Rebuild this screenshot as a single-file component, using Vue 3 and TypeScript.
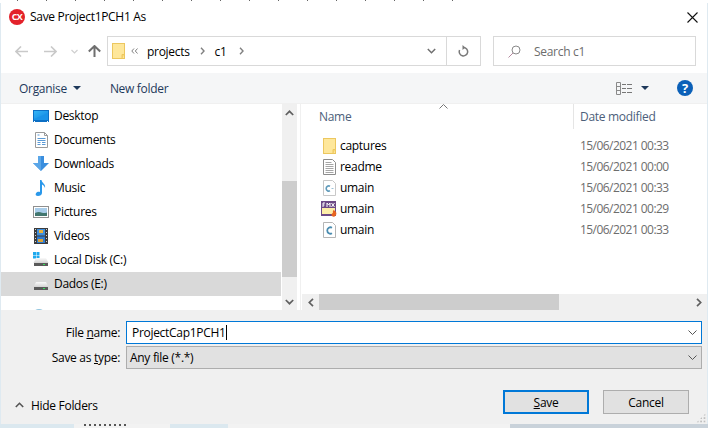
<template>
  <div class="screen">
    <svg class="sprites" width="0" height="0" aria-hidden="true">
      <defs>
        <linearGradient id="screen-fill" x1="0" y1="0" x2="1" y2="1">
          <stop offset="0" stop-color="#35b4f5" />
          <stop offset="1" stop-color="#0d84e2" />
        </linearGradient>
        <linearGradient id="disk-fill" x1="0" y1="0" x2="0" y2="1">
          <stop offset="0" stop-color="#fafafa" />
          <stop offset="1" stop-color="#d2d2d2" />
        </linearGradient>
      </defs>
      <symbol id="i-folder" viewBox="0 0 13 16">
        <rect x="0.5" y="0.5" width="12" height="15" fill="#fee79b" stroke="#ecc75f" />
        <path d="M10 15.5v-4h2.5" fill="#fbd56f" stroke="#ecc75f" />
      </symbol>
      <symbol id="i-desktop" viewBox="0 0 16 13">
        <rect x="0" y="0" width="16" height="12" fill="#0c6fc4" />
        <rect x="1" y="1" width="14" height="9" fill="url(#screen-fill)" />
        <path d="M1 9L15 3v7H1z" fill="#1a93e8" />
        <rect x="1" y="11" width="1" height="1" fill="#fff" />
        <rect x="14" y="11" width="1" height="1" fill="#fff" />
      </symbol>
      <symbol id="i-documents" viewBox="0 0 13 16">
        <path d="M.5.5h9l3 3v12H.5z" fill="#fff" stroke="#9a9a9a" />
        <path d="M2.500 3h2M2.500 6.500h8M2.500 8.500h8M2.500 10.500h3M7 10.500h3.500M2.500 12.500h3M7 12.500h3.500" stroke="#5b9ad6" />
        <path d="M9.500.5v3h3" fill="none" stroke="#9a9a9a" />
      </symbol>
      <symbol id="i-downloads" viewBox="0 0 16 16">
        <path d="M5 0h6v7h5l-8 8-8-8h5z" fill="#3a8ede" />
        <path d="M5 0h3v15l-8-8h5z" fill="#5aa6e8" />
      </symbol>
      <symbol id="i-music" viewBox="0 0 12 16">
        <path d="M5 0h1.500c.3 3 4.500 4 3.500 8-.5-2-1.800-3-3-3.500V13c0 2-2 3-4 3S0 14.500 1 13.200 3.500 11.500 5 12z" fill="#2a98ea" />
      </symbol>
      <symbol id="i-pictures" viewBox="0 0 16 12">
        <rect x="0.500" y="0.500" width="15" height="11" fill="#fff" stroke="#8f8f8f" />
        <rect x="2" y="2" width="12" height="8" fill="#a9cdea" />
        <path d="M2 7c3-1.500 5-1 7-.3s3 .3 5-.2V10H2z" fill="#42776f" />
      </symbol>
      <symbol id="i-videos" viewBox="0 0 14 16">
        <rect width="14" height="16" fill="#3c3c3c" />
        <rect x="3" y="1" width="8" height="6.500" fill="#3f8fdd" />
        <rect x="3" y="8.500" width="8" height="6.500" fill="#2e7ad0" />
        <rect x="5" y="2" width="4" height="3" fill="#e8b23c" />
        <rect x="4" y="11" width="5" height="3" fill="#d9a238" />
        <path d="M1 1.500h1M1 4.500h1M1 7.500h1M1 10.500h1M1 13.500h1M12 1.500h1M12 4.500h1M12 7.500h1M12 10.500h1M12 13.500h1" stroke="#d0d0d0" />
      </symbol>
      <symbol id="i-disk-c" viewBox="0 0 16 16">
        <path d="M0 0h3v3H0zM3.500 0h3v3h-3zM0 3.500h3v3H0zM3.500 3.500h3v3h-3z" fill="#1ea9ee" />
        <path d="M3 6h10l2.500 5H.5z" fill="url(#disk-fill)" />
        <rect x="1" y="11" width="14" height="3" fill="#5a5a5a" />
        <rect x="10" y="12" width="2" height="1" fill="#35e05a" />
      </symbol>
      <symbol id="i-disk" viewBox="0 0 16 16">
        <path d="M3 6h10l2.500 5H.5z" fill="url(#disk-fill)" />
        <rect x="1" y="11" width="14" height="3" fill="#5a5a5a" />
        <rect x="10" y="12" width="2" height="1" fill="#35e05a" />
      </symbol>
      <symbol id="i-network" viewBox="0 0 16 16">
        <circle cx="8" cy="8" r="7" fill="#8fc4de" />
        <circle cx="6" cy="5" r="2.500" fill="#dff0f7" />
      </symbol>
      <symbol id="i-text" viewBox="0 0 13 16">
        <path d="M.5.500h9l3 3v12H.5z" fill="#fff" stroke="#8c8c8c" />
        <path d="M2.500 3.500h6M2.500 5.500h8M2.500 7.500h8M2.500 9.500h8M2.500 11.500h8M2.500 13.500h8" stroke="#a6a6a6" />
      </symbol>
      <symbol id="i-cpp" viewBox="0 0 13 16">
        <path d="M.5.500h9l3 3v12H.5z" fill="#fff" stroke="#c8c8c8" />
        <path d="M7 6.200A2.600 2.600 0 1 0 7 10.800" fill="none" stroke="#5f9aba" stroke-width="1.600" />
        <path d="M8.500 8.500h2" stroke="#9cc2d8" />
      </symbol>
      <symbol id="i-c" viewBox="0 0 13 16">
        <path d="M.5.500h9l3 3v12H.5z" fill="#fff" stroke="#b5b5b5" />
        <path d="M9 5.700A3.200 3.200 0 1 0 9 11.300" fill="none" stroke="#4a8cb0" stroke-width="1.800" />
      </symbol>
      <symbol id="i-fmx" viewBox="0 0 16 16">
        <rect x="0" y="0" width="15" height="15" fill="#6d4a86" />
        <rect x="1" y="7" width="13" height="6" fill="#fdeea8" />
        <path d="M2 2v4M2 2h2M2 4h1.500M6 6V2l1.500 2L9 2v4M10.500 2l3 4M13.500 2l-3 4" fill="none" stroke="#fff" />
        <path d="M12.500 9c2.500 1 3.500 3 2.500 5s-3 2.200-4 1-.5-2.500 1-3c-.5-1 0-2 .5-3z" fill="#e8641f" />
      </symbol>
    </svg>

    <div class="strip strip-top"></div>

    <div class="window">
      <header class="titlebar">
        <span class="logo">CX</span>
        <span class="title">Save Project1PCH1 As</span>
        <svg class="close" width="11" height="11" viewBox="0 0 11 11">
          <path d="M.5.500l10 10M10.500.500l-10 10" stroke="#111" stroke-width="1.100" />
        </svg>
      </header>

      <div class="navbar">
        <div class="nav-buttons">
          <svg class="nav-back" width="13" height="11" viewBox="0 0 13 11">
            <path d="M6 .5L1 5.500l5 5M1 5.500h12" fill="none" stroke="#c9c9c9" stroke-width="1.600" />
          </svg>
          <svg class="nav-forward" width="13" height="11" viewBox="0 0 13 11">
            <path d="M7 .5l5 5-5 5M12 5.500H0" fill="none" stroke="#c9c9c9" stroke-width="1.600" />
          </svg>
          <svg class="nav-recent" width="7" height="5" viewBox="0 0 7 5">
            <path d="M.5 1l3 3 3-3" fill="none" stroke="#cfcfcf" stroke-width="1.200" />
          </svg>
          <svg class="nav-up" width="13" height="12" viewBox="0 0 13 12">
            <path d="M.8 6.500L6.500 1l5.700 5.500M6.500 1v11" fill="none" stroke="#6f6f6f" stroke-width="2" />
          </svg>
        </div>
        <div class="address">
          <svg class="address-folder" width="13" height="16"><use href="#i-folder" /></svg>
          <svg class="crumb-more" width="7" height="6" viewBox="0 0 7 6">
            <path d="M3 .5L.8 3 3 5.500M6.500.5L4.300 3l2.200 2.500" fill="none" stroke="#808080" />
          </svg>
          <span class="crumb">projects</span>
          <svg class="crumb-sep" width="5" height="8" viewBox="0 0 5 8">
            <path d="M1 .8L4 4 1 7.200" fill="none" stroke="#808080" stroke-width="1.400" />
          </svg>
          <span class="crumb">c1</span>
          <svg class="crumb-sep crumb-sep-last" width="5" height="8" viewBox="0 0 5 8">
            <path d="M1 .8L4 4 1 7.200" fill="none" stroke="#808080" stroke-width="1.400" />
          </svg>
          <svg class="address-drop" width="9" height="6" viewBox="0 0 9 6">
            <path d="M.8 1l3.700 3.700L8.200 1" fill="none" stroke="#6f6f6f" stroke-width="1.500" />
          </svg>
          <div class="refresh">
            <svg width="11" height="12" viewBox="0 0 11 12">
              <path d="M5.500 2.500A4.200 4.200 0 1 1 1.600 5" fill="none" stroke="#7a7a7a" stroke-width="1.500" />
              <path d="M4.500 0v5l2.800-2.500z" fill="#7a7a7a" />
            </svg>
          </div>
        </div>
        <div class="search">
          <svg width="13" height="13" viewBox="0 0 13 13">
            <circle cx="8" cy="5" r="4" fill="none" stroke="#8a8a8a" />
            <path d="M5 8l-4.500 4.500" stroke="#b58aa0" />
          </svg>
          <span>Search c1</span>
        </div>
      </div>

      <div class="toolbar">
        <span class="tool">Organise</span>
        <span class="caret caret-organise"></span>
        <span class="tool tool-new">New folder</span>
        <svg class="view-icon" width="17" height="13" viewBox="0 0 17 13">
          <path d="M.5.500h4v12h-4zM.5 4.500h4M.5 8.500h4" fill="none" stroke="#8a8a8a" />
          <path d="M6 2.500h4M11 2.500h5M6 6.500h4M11 6.500h5M6 10.500h4M11 10.500h5" stroke="#777" />
        </svg>
        <span class="caret caret-view"></span>
        <span class="help">?</span>
      </div>

      <div class="main">
        <nav class="nav-pane">
          <div
            v-for="item in places"
            :key="item.label"
            class="place"
            :class="{ selected: item.selected }"
          >
            <span class="place-icon">
              <svg :width="item.w" :height="item.h"><use :href="'#i-' + item.icon" /></svg>
            </span>
            <span class="place-label">{{ item.label }}</span>
          </div>
          <svg class="peek-icon" width="16" height="16"><use href="#i-network" /></svg>
        </nav>
        <div class="vscroll">
          <div class="arrow-btn">
            <svg width="9" height="6" viewBox="0 0 9 6"><path d="M.8 5l3.700-3.700L8.200 5" fill="none" stroke="#606060" stroke-width="1.700" /></svg>
          </div>
          <div class="vtrack"><div class="vthumb"></div></div>
          <div class="arrow-btn">
            <svg width="9" height="6" viewBox="0 0 9 6"><path d="M.8 1l3.700 3.700L8.200 1" fill="none" stroke="#606060" stroke-width="1.700" /></svg>
          </div>
        </div>
        <div class="splitter"></div>
        <section class="file-pane">
          <div class="file-header">
            <svg class="sort-caret" width="9" height="5" viewBox="0 0 9 5">
              <path d="M.5 4.500l4-4 4 4" fill="none" stroke="#777" />
            </svg>
            <span class="col-name">Name</span>
            <span class="col-date">Date modified</span>
          </div>
          <div class="file-rows">
            <div v-for="file in files" :key="file.icon + file.date" class="file-row">
              <span class="file-icon">
                <svg :width="file.w" height="16"><use :href="'#i-' + file.icon" /></svg>
              </span>
              <span class="file-name">{{ file.name }}</span>
              <span class="file-date">{{ file.date }}</span>
            </div>
          </div>
          <div class="hscroll">
            <svg class="hleft" width="6" height="9" viewBox="0 0 6 9"><path d="M5 .8L1.300 4.500 5 8.200" fill="none" stroke="#606060" stroke-width="1.700" /></svg>
            <div class="hthumb"></div>
            <svg class="hright" width="6" height="9" viewBox="0 0 6 9"><path d="M1 .8l3.700 3.700L1 8.200" fill="none" stroke="#606060" stroke-width="1.700" /></svg>
          </div>
        </section>
      </div>

      <div class="bottom">
        <div class="field field-name">
          <label>File <u>n</u>ame:</label>
          <div class="input input-active">
            <span>ProjectCap1PCH1</span><i class="cursor"></i>
            <svg class="chev" width="9" height="5" viewBox="0 0 9 5"><path d="M.5.500l4 4 4-4" fill="none" stroke="#555" /></svg>
          </div>
        </div>
        <div class="field field-type">
          <label>Save as <u>t</u>ype:</label>
          <div class="input input-select">
            <span>Any file (*.*)</span>
            <svg class="chev" width="9" height="5" viewBox="0 0 9 5"><path d="M.5.500l4 4 4-4" fill="none" stroke="#555" /></svg>
          </div>
        </div>
        <div class="actions">
          <div class="hide-folders">
            <svg width="9" height="6" viewBox="0 0 9 6"><path d="M.8 5l3.700-3.700L8.200 5" fill="none" stroke="#555" stroke-width="1.600" /></svg>
            <span>Hide Folders</span>
          </div>
          <button class="btn btn-primary"><u>S</u>ave</button>
          <button class="btn">Cancel</button>
        </div>
        <div class="grip"></div>
      </div>
    </div>

    <div class="strip strip-bottom"></div>
  </div>
</template>

<script setup lang="ts">
interface Place {
  label: string
  icon: string
  w: number
  h: number
  selected?: boolean
}

interface FileRow {
  name: string
  icon: string
  w: number
  date: string
}

const places: Place[] = [
  { label: 'Desktop', icon: 'desktop', w: 16, h: 13 },
  { label: 'Documents', icon: 'documents', w: 13, h: 16 },
  { label: 'Downloads', icon: 'downloads', w: 16, h: 16 },
  { label: 'Music', icon: 'music', w: 12, h: 16 },
  { label: 'Pictures', icon: 'pictures', w: 16, h: 12 },
  { label: 'Videos', icon: 'videos', w: 14, h: 16 },
  { label: 'Local Disk (C:)', icon: 'disk-c', w: 16, h: 16 },
  { label: 'Dados (E:)', icon: 'disk', w: 16, h: 16, selected: true },
]

const files: FileRow[] = [
  { name: 'captures', icon: 'folder', w: 13, date: '15/06/2021 00:33' },
  { name: 'readme', icon: 'text', w: 13, date: '15/06/2021 00:00' },
  { name: 'umain', icon: 'cpp', w: 13, date: '15/06/2021 00:33' },
  { name: 'umain', icon: 'fmx', w: 16, date: '15/06/2021 00:29' },
  { name: 'umain', icon: 'c', w: 13, date: '15/06/2021 00:33' },
]
</script>

<style>
html,
body {
  margin: 0;
  background: #dfeaf1;
}
</style>

<style scoped>
.screen {
  width: 708px;
  height: 428px;
  display: flex;
  flex-direction: column;
  overflow: hidden;
  font-family: 'Open Sans', 'Noto Sans', sans-serif;
  font-size: 12px;
  letter-spacing: -0.3px;
  color: #000;
}

.sprites {
  position: absolute;
}

.strip {
  flex: none;
}

.strip-top {
  height: 3px;
  background: repeating-linear-gradient(90deg, #fff 0 17px, #666 17px 18px, #fff 18px 29px);
  background-size: 460px 1px;
  background-repeat: no-repeat;
  background-color: #fff;
}

.strip-bottom {
  height: 4px;
  background:
    repeating-linear-gradient(90deg, #555 0 2px, transparent 2px 5px) 84px 0 / 45px 2px no-repeat,
    linear-gradient(90deg, #dbe8ef 0 74px, #f2f2f2 74px 170px, #dbe8ef 170px 228px, #f2f2f2 228px 510px, #c9d2da 510px);
}

.window {
  flex: 1;
  min-height: 0;
  margin: 0 1px;
  display: flex;
  flex-direction: column;
  background: #fff;
}

.titlebar {
  height: 27px;
  flex: none;
  display: flex;
  align-items: center;
  padding: 0 9px 0 8px;
}

.logo {
  width: 16px;
  height: 16px;
  margin-top: 1px;
  border-radius: 50%;
  background: #e3222b;
  color: #fff;
  font-size: 9px;
  font-weight: 700;
  letter-spacing: -0.5px;
  line-height: 16px;
  text-align: center;
}

.title {
  margin-left: 5px;
  margin-top: -1px;
  flex: 1;
}

.close {
  margin-top: 1px;
}

.navbar {
  height: 30px;
  flex: none;
  margin-top: 6px;
  display: flex;
  padding-right: 11px;
}

.nav-buttons {
  width: 106px;
  display: flex;
  align-items: center;
  padding-left: 14px;
  box-sizing: border-box;
}

.nav-forward {
  margin-left: 16px;
}

.nav-recent {
  margin-left: 14px;
}

.nav-up {
  margin-left: 10px;
  margin-top: -1px;
}

.address {
  width: 374px;
  box-sizing: border-box;
  border: 1px solid #d9d9d9;
  display: flex;
  align-items: center;
  padding-left: 4px;
}

.crumb-more {
  margin-left: 6px;
  margin-right: 9px;
}

.crumb-sep {
  margin: 0 10px;
}

.crumb-sep-last {
  margin-left: 12px;
}

.address-drop {
  margin-left: auto;
  margin-right: 10px;
}

.refresh {
  width: 33px;
  height: 100%;
  border-left: 1px solid #d9d9d9;
  display: flex;
  align-items: center;
  justify-content: center;
}

.search {
  margin-left: 12px;
  flex: 1;
  box-sizing: border-box;
  border: 1px solid #d9d9d9;
  display: flex;
  align-items: center;
  gap: 13px;
  padding-left: 14px;
  color: #6d6d6d;
}

.toolbar {
  height: 30px;
  flex: none;
  margin-top: 7px;
  background: #f5f6f7;
  display: flex;
  align-items: center;
  padding: 0 14px 0 18px;
}

.tool {
  color: #1e395b;
}

.tool-new {
  margin-left: 29px;
}

.caret {
  width: 0;
  height: 0;
  border-left: 4px solid transparent;
  border-right: 4px solid transparent;
  border-top: 4px solid #1e395b;
}

.caret-organise {
  margin-left: 6px;
}

.view-icon {
  margin-left: auto;
}

.caret-view {
  margin-left: 8px;
}

.help {
  margin-left: 28px;
  width: 16px;
  height: 16px;
  border-radius: 50%;
  background: #0b60b8;
  color: #fff;
  font-size: 13px;
  font-weight: 700;
  line-height: 16px;
  text-align: center;
  letter-spacing: 0;
}

.main {
  height: 207px;
  flex: none;
  display: flex;
  overflow: hidden;
  border-top: 1px solid #f0f0f0;
  box-sizing: border-box;
}

.nav-pane {
  width: 280px;
  flex: none;
}

.place {
  height: 24px;
  display: flex;
  align-items: center;
}

.place.selected {
  background: #d9d9d9;
}

.place-icon {
  width: 16px;
  margin: 0 5px 0 32px;
  display: flex;
  justify-content: center;
}

.place-label {
  margin-top: -1px;
}

.peek-icon {
  display: block;
  margin: 12px 0 0 30px;
}

.vscroll {
  width: 15px;
  margin-left: 1px;
  flex: none;
  display: flex;
  flex-direction: column;
  background: #f0f0f0;
}

.arrow-btn {
  height: 17px;
  flex: none;
  display: flex;
  align-items: center;
  justify-content: center;
}

.vtrack {
  flex: 1;
  min-height: 0;
}

.vthumb {
  height: 96px;
  margin-top: 60px;
  background: #cdcdcd;
}

.splitter {
  width: 1px;
  margin-left: 3px;
  flex: none;
  background: #f0f0f0;
}

.file-pane {
  flex: 1;
  min-width: 0;
  display: flex;
  flex-direction: column;
}

.file-header {
  height: 25px;
  flex: none;
  position: relative;
  display: flex;
  color: #4c607a;
}

.sort-caret {
  position: absolute;
  left: 138px;
  top: 0;
}

.col-name {
  width: 272px;
  padding-left: 18px;
  box-sizing: border-box;
  line-height: 26px;
}

.col-date {
  border-left: 1px solid #e5e5e5;
  padding-left: 6px;
  line-height: 26px;
}

.file-rows {
  flex: 1;
  padding-top: 6px;
}

.file-row {
  height: 21px;
  display: flex;
  align-items: center;
}

.file-icon {
  width: 16px;
  margin-left: 20px;
  display: flex;
  justify-content: center;
}

.file-name {
  width: 240px;
  margin-left: 3px;
}

.file-date {
  color: #6d6d6d;
  letter-spacing: -0.55px;
}

.hscroll {
  height: 16px;
  flex: none;
  margin-left: 1px;
  display: flex;
  align-items: center;
  background: #f0f0f0;
}

.hleft {
  margin-left: 6px;
}

.hthumb {
  width: 240px;
  height: 100%;
  margin-left: 5px;
  background: #cdcdcd;
}

.hright {
  margin-left: auto;
  margin-right: 5px;
}

.bottom {
  flex: 1;
  min-height: 0;
  position: relative;
  background: #f0f0f0;
  padding: 11px 5px 0 0;
}

.field {
  display: flex;
  align-items: center;
}

.field label {
  width: 119px;
  text-align: right;
  flex: none;
}

.field-type {
  margin-top: 2px;
}

.input {
  flex: 1;
  margin-left: 6px;
  height: 23px;
  box-sizing: border-box;
  display: flex;
  align-items: center;
  position: relative;
}

.input-active {
  background: #fff;
  border: 1px solid #0078d7;
  padding-left: 5px;
}

.input-select {
  background: #e1e1e1;
  border: 1px solid #adadad;
  padding-left: 3px;
}

.cursor {
  width: 1px;
  height: 15px;
  background: #000;
}

.chev {
  position: absolute;
  right: 4px;
  top: 8px;
}

.actions {
  margin-top: 21px;
  display: flex;
  align-items: center;
  padding-right: 13px;
}

.hide-folders {
  margin-right: auto;
  padding: 6px 0 0 14px;
  display: flex;
  align-items: center;
  gap: 7px;
}

.btn {
  width: 86px;
  height: 24px;
  padding: 0;
  box-sizing: border-box;
  background: #e1e1e1;
  border: 1px solid #adadad;
  font: inherit;
  letter-spacing: inherit;
  color: #000;
}

.btn + .btn {
  margin-left: 14px;
}

.btn-primary {
  border: 2px solid #0078d7;
}

.grip {
  position: absolute;
  right: 1px;
  bottom: 1px;
  width: 10px;
  height: 10px;
  background:
    radial-gradient(circle, #bfbfbf 1.200px, transparent 1.300px) 0 0 / 3.400px 3.400px;
  clip-path: polygon(100% 0, 100% 100%, 0 100%);
}
</style>
